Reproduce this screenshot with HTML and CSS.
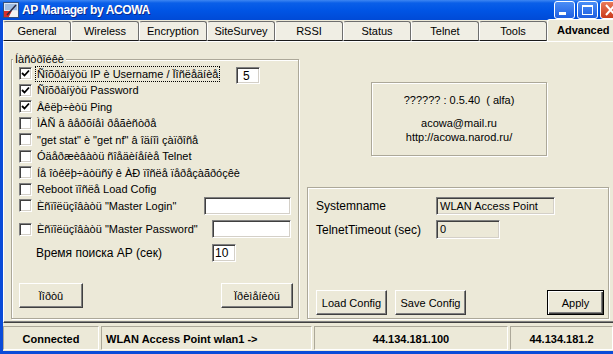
FILE: index.html
```html
<!DOCTYPE html>
<html>
  <head>
    <meta charset="utf-8">
    <title>AP Manager by ACOWA</title>
    <link rel="stylesheet" href="styles.css">
  </head>
  <body>
    <div class="window">
      <div class="titlebar">
        <svg class="appicon" width="16" height="16" viewBox="0 0 16 16">
          <rect x="0.5" y="0.5" width="15" height="15" fill="#dbe6f4" stroke="#34507e"/>
          <rect x="2" y="2" width="12" height="6" fill="#9fbbe0"/>
          <polygon points="1,9 9,9 6,15 1,15" fill="#d8302a"/>
          <polygon points="9,9 15,9 15,15 6,15" fill="#f2f2f2"/>
          <line x1="4" y1="13" x2="13" y2="3" stroke="#2a2a44" stroke-width="1.5"/>
        </svg>
        <span class="title">AP Manager by ACOWA</span>
        <div class="caption-buttons">
          <span class="cbtn">
            <svg width="19" height="16" viewBox="0 0 19 16"><rect x="4" y="10" width="7" height="3" fill="#fff"/></svg>
          </span>
          <span class="cbtn">
            <svg width="19" height="16" viewBox="0 0 19 16"><rect x="4.5" y="3.5" width="10" height="9" fill="none" stroke="#fff"/><rect x="4" y="3" width="11" height="2" fill="#fff"/></svg>
          </span>
          <span class="cbtn close">
            <svg width="19" height="16" viewBox="0 0 19 16"><path d="M5 3 L14 13 M14 3 L5 13" stroke="#fff" stroke-width="2"/></svg>
          </span>
        </div>
      </div>

      <div class="frame">
        <div class="tabs">
          <div class="tab">General</div>
          <div class="tab">Wireless</div>
          <div class="tab">Encryption</div>
          <div class="tab">SiteSurvey</div>
          <div class="tab">RSSI</div>
          <div class="tab">Status</div>
          <div class="tab">Telnet</div>
          <div class="tab">Tools</div>
          <div class="tab active">Advanced</div>
        </div>

        <div class="panel">
          <fieldset class="group settings">
            <legend>Íàñòðîéêè</legend>
            <div class="row first">
              <span class="check"><svg width="9" height="9" viewBox="0 0 9 9"><path d="M1 4 L3.5 6.5 L8 1.5" fill="none" stroke="#000" stroke-width="1.8"/></svg></span>
              <span class="label focus">Ñîõðàíÿòü IP è Username / Ïîñëåäíèå</span>
              <span class="edit num">5</span>
            </div>
            <div class="row">
              <span class="check"><svg width="9" height="9" viewBox="0 0 9 9"><path d="M1 4 L3.5 6.5 L8 1.5" fill="none" stroke="#000" stroke-width="1.8"/></svg></span>
              <span class="label">Ñîõðàíÿòü Password</span>
            </div>
            <div class="row">
              <span class="check"><svg width="9" height="9" viewBox="0 0 9 9"><path d="M1 4 L3.5 6.5 L8 1.5" fill="none" stroke="#000" stroke-width="1.8"/></svg></span>
              <span class="label">Âêëþ÷èòü Ping</span>
            </div>
            <div class="row">
              <span class="check"></span>
              <span class="label">ÌÀÑ â âåðõíåì ðåãèñòðå</span>
            </div>
            <div class="row">
              <span class="check"></span>
              <span class="label">"get stat" è "get nf" â îäíîì çàïðîñå</span>
            </div>
            <div class="row">
              <span class="check"></span>
              <span class="label">Óäåðæèâàòü ñîåäèíåíèå Telnet</span>
            </div>
            <div class="row">
              <span class="check"></span>
              <span class="label">Íå îòêëþ÷àòüñÿ ê ÀÐ ïîñëå ïåðåçàãðóçêè</span>
            </div>
            <div class="row">
              <span class="check"></span>
              <span class="label">Reboot ïîñëå Load Cofig</span>
            </div>
            <div class="row">
              <span class="check"></span>
              <span class="label">Èñïîëüçîâàòü "Master Login"</span>
              <span class="edit login"></span>
            </div>
            <div class="row password">
              <span class="check"></span>
              <span class="label">Èñïîëüçîâàòü "Master Password"</span>
              <span class="edit pass"></span>
            </div>
            <div class="row search">
              <span class="caption">Время поиска AP (сек)</span>
              <span class="edit short">10</span>
            </div>
            <div class="buttons">
              <span class="btn ports">Ïîðòû</span>
              <span class="btn applyru">Ïðèìåíèòü</span>
            </div>
          </fieldset>

          <div class="side">
            <div class="about">
              <div>?????? : 0.5.40 &nbsp;( alfa)</div>
              <div class="mail">acowa@mail.ru</div>
              <div>http://acowa.narod.ru/</div>
            </div>
            <div class="group system">
              <div class="field">
                <span class="name">Systemname</span>
                <span class="edit ro sysname">WLAN Access Point</span>
              </div>
              <div class="field second">
                <span class="name">TelnetTimeout (sec)</span>
                <span class="edit ro timeout">0</span>
              </div>
              <div class="buttons config">
                <span class="btn cfg">Load Config</span>
                <span class="btn cfg">Save Config</span>
                <span class="btn default">Apply</span>
              </div>
            </div>
          </div>
        </div>

        <div class="statusbar">
          <div class="cell state">Connected</div>
          <div class="cell ap">WLAN Access Point wlan1 -&gt;</div>
          <div class="cell ip1">44.134.181.100</div>
          <div class="cell ip2">44.134.181.2</div>
        </div>
      </div>
    </div>
  </body>
</html>
```

FILE: styles.css
```css
* { box-sizing: border-box; }
html, body { margin: 0; }
body
{
    width: 613px;
    height: 354px;
    overflow: hidden;
    background-color: #ece9d8;
    font: 11px "Liberation Sans", Arial, sans-serif;
    color: #000;
}
.window
{
    display: flex;
    flex-direction: column;
    height: 354px;
}

/* title bar */
.titlebar
{
    height: 20px;
    flex: none;
    display: flex;
    align-items: center;
    padding-left: 3px;
    overflow: hidden;
    color: #fff;
    background: linear-gradient(#3d86f2 0, #0a5fe8 3px, #0055e5 50%, #004ad6 100%);
}
.appicon { flex: none; margin-right: 3px; }
.title
{
    font-weight: bold;
    font-size: 12px;
    letter-spacing: -0.4px;
    text-shadow: 1px 1px #0c2a8c;
}
.caption-buttons
{
    margin-left: auto;
    margin-right: -8px;
    display: flex;
    gap: 2px;
    align-self: flex-start;
    padding-top: 1px;
}
.cbtn
{
    width: 21px;
    height: 18px;
    border: 1px solid #fff;
    border-radius: 3px;
    background: linear-gradient(#4b8ef6, #1f5ee0);
}
.cbtn svg { display: block; }
.cbtn.close { background: linear-gradient(#ea7a58, #c93a1c); }

/* frame below the title */
.frame
{
    flex: 1;
    display: flex;
    flex-direction: column;
    border-left: 3px solid #0a4bd8;
    border-bottom: 3px solid #0a4bd8;
}
.tabs
{
    height: 21px;
    flex: none;
    display: flex;
    align-items: flex-end;
}
.tab
{
    width: 68px;
    height: 20px;
    flex: none;
    border: 1px solid #6e6e6e;
    border-left-color: #fff;
    border-bottom: 1px solid #1a1a1a;
    border-radius: 3px 3px 0 0;
    background: #f0eee4;
    text-align: center;
    line-height: 18px;
}
.tab.active
{
    width: 80px;
    height: 22px;
    border-color: #fff;
    border-bottom: none;
    border-right: none;
    background: #ece9d8;
    font-weight: bold;
    text-align: left;
    padding-left: 9px;
    line-height: 21px;
}

.panel
{
    height: 282px;
    flex: none;
    display: grid;
    grid-template-columns: 288px 302px;
    column-gap: 8px;
    align-items: stretch;
    padding: 11px 0 3px 7px;
    border-top: 1px solid #fff;
    border-left: 1px solid #fff;
    border-bottom: 1px solid #404040;
    box-shadow: inset 0 -1px #808080;
}

/* group boxes */
.group
{
    margin: 0;
    padding: 0;
    min-width: 0;
    border: 1px solid #aca899;
    box-shadow: inset 1px 1px #fff, 1px 1px #fff;
}
legend
{
    padding: 0 2px;
    margin-left: 1px;
    line-height: 12px;
    background: #ece9d8;
}
.settings { padding-bottom: 3px; }
.row
{
    height: 16.5px;
    display: flex;
    align-items: center;
    padding: 0 7px;
}
.row.first { height: 17px; }
.row.password { height: 20px; margin-top: 5px; }
.row.search { height: 19px; margin-top: 4px; }
.check
{
    width: 13px;
    height: 13px;
    flex: none;
    display: flex;
    align-items: center;
    justify-content: center;
    background: #fff;
    border: 1px solid;
    border-color: #808080 #fff #fff #808080;
    box-shadow: inset 1px 1px #404040, inset -1px -1px #d4d0c8;
}
.check svg { display: block; }
.label
{
    margin-left: 3px;
    padding: 0 1px;
    border: 1px dotted transparent;
    white-space: nowrap;
    line-height: 14px;
}
.label.focus { border-color: #000; }
.caption { margin-left: 17px; font-size: 12px; }

.edit
{
    height: 18px;
    flex: none;
    margin-left: auto;
    padding-left: 3px;
    background: #fff;
    border: 1px solid;
    border-color: #808080 #fff #fff #808080;
    box-shadow: inset 1px 1px #404040, inset -1px -1px #d4d0c8;
    line-height: 16px;
    font-size: 12px;
}
.edit.num { width: 24px; height: 17px; margin-right: 31px; padding-left: 6px; margin-top: 4px; }
.edit.login { width: 87px; }
.edit.pass { width: 79px; }
.edit.short { width: 24px; margin-right: 55px; padding-left: 2px; }
.edit.ro { background: #ece9d8; font-size: 11px; }
.edit.sysname { width: 119px; }
.edit.timeout { width: 64px; height: 19px; }

.buttons
{
    display: flex;
    justify-content: space-between;
    margin-top: 21px;
    padding: 0 5px 0 7px;
}
.btn
{
    height: 25px;
    display: flex;
    align-items: center;
    justify-content: center;
    background: #ece9d8;
    border: 1px solid;
    border-color: #fff #404040 #404040 #fff;
    box-shadow: inset -1px -1px #808080;
}
.btn.ports { width: 64px; }
.btn.applyru { width: 72px; }
.btn.cfg { width: 71px; }
.btn.default
{
    width: 57px;
    margin-left: auto;
    border-color: #000;
    box-shadow: inset 1px 1px #fff, inset -1px -1px #404040, inset -2px -2px #808080;
}

/* right column */
.side
{
    display: flex;
    flex-direction: column;
}
.about
{
    width: 176px;
    height: 74px;
    margin: 29px 0 0 64px;
    padding-top: 10px;
    border: 1px solid #aca899;
    box-shadow: inset 1px 1px #fff, 1px 1px #fff;
    text-align: center;
    line-height: 14px;
}
.about .mail { margin-top: 9px; }
.system
{
    flex: 1;
    margin-top: 31px;
    display: flex;
    flex-direction: column;
    padding: 9px 4px 3px 8px;
}
.field
{
    height: 18px;
    display: flex;
    align-items: center;
    font-size: 12px;
}
.field.second { height: 19px; margin-top: 5px; }
.field .name { width: 120px; flex: none; }
.field .edit { margin-left: 0; }
.buttons.config
{
    margin-top: auto;
    justify-content: flex-start;
    gap: 8px;
    padding: 0;
}

/* status bar */
.statusbar
{
    height: 25px;
    flex: none;
    margin-top: 3px;
    padding-bottom: 1px;
    display: flex;
    gap: 2px;
    font-weight: bold;
}
.cell
{
    height: 24px;
    display: flex;
    align-items: center;
    justify-content: center;
    padding-top: 2px;
    border: 1px solid;
    border-color: #aca899 #fff #fff #aca899;
    white-space: nowrap;
}
.cell.state { width: 96px; }
.cell.ap { width: 211px; justify-content: flex-start; padding-left: 4px; }
.cell.ip1 { width: 194px; }
.cell.ip2 { flex: 1; }
```
